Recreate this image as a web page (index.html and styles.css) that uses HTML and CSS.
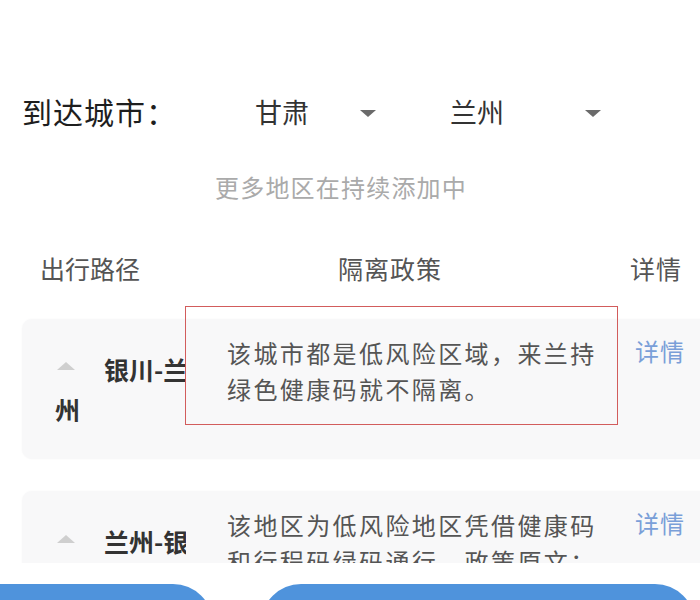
FILE: index.html
```html
<!DOCTYPE html>
<html lang="zh-CN">
<head>
<meta charset="utf-8">
<title>到达城市</title>
<link rel="stylesheet" href="styles.css">
</head>
<body>
<div class="page">
  <div class="city-row">
    <div class="city-label">到达城市：</div>
    <div class="picker picker-prov"><span class="picker-text">甘肃</span><span class="caret"></span></div>
    <div class="picker picker-city"><span class="picker-text">兰州</span><span class="caret"></span></div>
  </div>
  <div class="hint">更多地区在持续添加中</div>
  <div class="head">
    <div class="head-route">出行路径</div>
    <div class="head-policy">隔离政策</div>
    <div class="head-detail">详情</div>
  </div>
  <div class="list">
    <div class="card">
      <div class="route"><span class="up"></span><span class="route-text">银川-兰州</span></div>
      <div class="policy policy-hl">该城市都是低风险区域，来兰持绿色健康码就不隔离。</div>
      <div class="detail">详情</div>
    </div>
    <div class="card">
      <div class="route"><span class="up"></span><span class="route-text">兰州-银川</span></div>
      <div class="policy">该地区为低风险地区凭借健康码和行程码绿码通行，政策原文：</div>
      <div class="detail">详情</div>
    </div>
  </div>
  <div class="footer">
    <div class="btn btn-left"></div>
    <div class="btn btn-right"></div>
  </div>
</div>
</body>
</html>
```

FILE: styles.css
```css
html, body {
  margin: 0;
  padding: 0;
  background: #ffffff;
}
body {
  width: 700px;
  height: 600px;
  overflow: hidden;
  font-family: "Noto Sans CJK SC", "Noto Sans", sans-serif;
}
.page {
  width: 700px;
  height: 600px;
  overflow: hidden;
}
.city-row {
  display: flex;
  align-items: center;
  height: 50px;
  margin-top: 86px;
  padding-left: 22px;
}
.city-label {
  width: 233px;
  font-size: 30px;
  color: #1e1e1e;
  letter-spacing: 1px;
}
.picker {
  display: flex;
  align-items: center;
  font-size: 27px;
  color: #333333;
}
.picker-prov { width: 195px; }
.picker-text { width: 105px; }
.caret {
  width: 0;
  height: 0;
  border-left: 8px solid transparent;
  border-right: 8px solid transparent;
  border-top: 7px solid #6a6a6a;
  margin-top: 4px;
}
.picker-city .picker-text { width: 135px; }
.hint {
  margin-top: 38px;
  padding-left: 215px;
  font-size: 24px;
  line-height: 26px;
  color: #aaaaaa;
  letter-spacing: 1.2px;
}
.head {
  display: flex;
  align-items: center;
  margin-top: 50px;
  height: 36px;
  font-size: 25px;
  color: #555555;
}
.head-route { padding-left: 40px; width: 298px; }
.head-policy { width: 292px; letter-spacing: 1px; }
.head-detail { letter-spacing: 1px; }
.list {
  margin-top: 20px;
  height: 257px;
  overflow: hidden;
  padding-left: 22px;
}
.card {
  display: flex;
  align-items: flex-start;
  width: 700px;
  background: #f8f8f9;
  border-radius: 10px;
  box-shadow: 0 0 2px rgba(0, 0, 0, 0.04);
}
.card:first-child { margin-top: 13px; }
.card + .card { margin-top: 32px; }
.route {
  width: 143px;
  flex: none;
  padding: 28px 0 32px 33px;
  overflow: hidden;
  font-size: 25px;
  line-height: 36px;
  font-weight: 700;
  color: #333333;
}
.up {
  display: inline-block;
  width: 0;
  height: 0;
  border-left: 9px solid transparent;
  border-right: 9px solid transparent;
  border-bottom: 8px solid #cfcfcf;
  margin: 0 29px 6px 2px;
  vertical-align: middle;
}
.route-text { vertical-align: middle; }
.policy {
  position: relative;
  width: 374px;
  flex: none;
  margin-left: -12px;
  padding: 16px 17px 0 41px;
  background: #f8f8f9;
  font-size: 24px;
  line-height: 36px;
  letter-spacing: 2.4px;
  color: #555555;
}
.policy-hl::after {
  content: "";
  position: absolute;
  top: -13px;
  left: -1px;
  right: 0;
  bottom: -18px;
  border: 1px solid #d25c5c;
}
.detail {
  padding: 14px 0 0 17px;
  font-size: 24px;
  line-height: 36px;
  color: #7a9fd8;
  letter-spacing: 1px;
}
.footer {
  display: flex;
  margin-top: 21px;
  gap: 48px;
}
.btn {
  height: 80px;
  background: #4f93dc;
  border-radius: 40px;
}
.btn-left {
  width: 253px;
  margin-left: -40px;
}
.btn-right {
  width: 434px;
}
```
